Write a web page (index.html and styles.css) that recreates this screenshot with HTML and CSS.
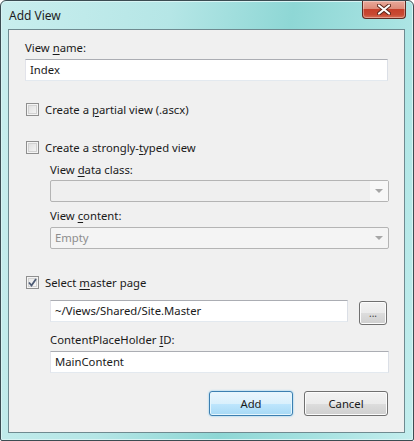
FILE: index.html
```html
<!DOCTYPE html>
<html lang="en">
<head>
    <meta charset="UTF-8">
    <meta name="viewport" content="width=device-width, initial-scale=1.0">
    <title>Add View</title>
    <link rel="stylesheet" href="styles.css">
</head>
<body>
    <div class="window">
        <div class="titlebar">
            <span class="title">Add View</span>
            <div class="close">
                <svg width="14" height="11" viewBox="0 0 14 11">
                    <path d="M2 1.5 L12 9.5 M12 1.5 L2 9.5" stroke="#5a2418" stroke-width="4" stroke-linecap="round"/>
                    <path d="M2 1.5 L12 9.5 M12 1.5 L2 9.5" stroke="#ffffff" stroke-width="2.2" stroke-linecap="round"/>
                </svg>
            </div>
        </div>

        <div class="client">
            <div class="label first">View <u>n</u>ame:</div>
            <div class="textbox">Index</div>

            <label class="check row-partial">
                <span class="box"></span>
                <span>Create a <u>p</u>artial view (.ascx)</span>
            </label>

            <label class="check row-typed">
                <span class="box"></span>
                <span>Create a strongly-<u>t</u>yped view</span>
            </label>

            <div class="group">
                <div class="label gap-small">View <u>d</u>ata class:</div>
                <div class="combo combo-empty">
                    <span class="combo-text"></span>
                    <span class="combo-drop"><span class="arrow"></span></span>
                </div>
                <div class="label gap-mid">View <u>c</u>ontent:</div>
                <div class="combo">
                    <span class="combo-text">Empty</span>
                    <span class="combo-drop"><span class="arrow"></span></span>
                </div>
            </div>

            <label class="check row-master">
                <span class="box checked">
                    <svg width="9" height="9" viewBox="0 0 9 9">
                        <path d="M1 4.5 L3.5 7.5 L8 1" fill="none" stroke="#4d5b75" stroke-width="1.8"/>
                    </svg>
                </span>
                <span>Select <u>m</u>aster page</span>
            </label>

            <div class="group">
                <div class="master-row">
                    <div class="textbox master">~/Views/Shared/Site.Master</div>
                    <button class="btn browse">...</button>
                </div>
                <div class="label gap-holder">ContentPlaceHolder <u>I</u>D:</div>
                <div class="textbox holder">MainContent</div>
            </div>

            <div class="actions">
                <button class="btn default">Add</button>
                <button class="btn">Cancel</button>
            </div>
        </div>
    </div>
</body>
</html>
```

FILE: styles.css
```css
body {
    margin: 0;
    font-family: "Segoe UI", "Noto Sans", sans-serif;
    font-size: 11.3px;
    color: #1a1a1a;
    background: #ffffff;
}
.window {
    width: 414px;
    height: 441px;
    box-sizing: border-box;
    border: 1px solid #3b4c52;
    border-radius: 6px 6px 2px 2px;
    padding: 0 8px 7px 7px;
    display: flex;
    flex-direction: column;
    background: linear-gradient(100deg, #c9eeee 0%, #b5e6e6 35%, #8ed7d5 60%, #a6e2e1 80%, #c4eeee 100%);
    box-shadow: inset 0 0 0 1px #d8f4f4;
}
.titlebar {
    height: 28px;
    display: flex;
    justify-content: space-between;
    align-items: flex-start;
}
.title {
    padding-left: 1px;
    margin-top: 6px;
    font-size: 12px;
    color: #1e1e1e;
}
.close {
    width: 44px;
    height: 18px;
    margin-right: -1px;
    box-sizing: border-box;
    border: 1px solid #5e2b22;
    border-top: none;
    border-radius: 0 0 4px 4px;
    background: linear-gradient(#e9a99a 0%, #dd8c7a 45%, #c6402b 50%, #c84a33 80%, #d86e55 100%);
    box-shadow: inset 0 0 0 1px rgba(255,255,255,0.35);
    display: flex;
    align-items: center;
    justify-content: center;
}
.client {
    flex: 1;
    background: #f0f0f0;
    border: 1px solid #6f8a90;
    padding: 10px 16px 0 16px;
}
.label {
    height: 16px;
    line-height: 16px;
}
.textbox {
    height: 22px;
    box-sizing: border-box;
    border: 1px solid #abadb3;
    border-color: #abadb3 #dbdfe6 #e3e9ef #e2e3ea;
    background: #ffffff;
    padding: 0 4px;
    line-height: 20px;
    margin-top: 3px;
}
.check {
    display: flex;
    align-items: center;
    height: 16px;
    padding-left: 1px;
}
.box {
    width: 13px;
    height: 13px;
    box-sizing: border-box;
    border: 1px solid #8f8f8f;
    background: linear-gradient(135deg, #dcdcdc, #f8f8f8);
    box-shadow: inset 0 0 0 1px #f4f4f4, inset 0 0 0 2px #d2d2d2;
    margin-right: 6px;
    display: flex;
    align-items: center;
    justify-content: center;
}
.box.checked {
    background: linear-gradient(135deg, #e6e6e6, #fafafa);
}
.row-partial {
    margin-top: 20px;
}
.row-typed {
    margin-top: 22px;
}
.row-master {
    margin-top: 25px;
}
.group {
    margin-left: 25px;
    margin-right: -1px;
}
.gap-small {
    margin-top: 7px;
}
.gap-mid {
    margin-top: 6px;
}
.combo {
    height: 22px;
    box-sizing: border-box;
    border: 1px solid #b4b4b4;
    border-radius: 2px;
    background: #f4f4f4;
    display: flex;
    margin-top: 2px;
}
.gap-mid + .combo {
    margin-top: 3px;
}
.combo-empty {
    background: #efefef;
}
.combo-text {
    flex: 1;
    padding-left: 4px;
    line-height: 20px;
    color: #8d8d8d;
}
.combo-drop {
    width: 18px;
    display: flex;
    align-items: center;
    justify-content: center;
}
.combo-empty .combo-drop {
    background: #f7f7f7;
}
.arrow {
    width: 0;
    height: 0;
    border-left: 4px solid transparent;
    border-right: 4px solid transparent;
    border-top: 4px solid #a6a6a6;
}
.master-row {
    display: flex;
    align-items: flex-start;
    margin-top: 10px;
}
.textbox.master {
    width: 298px;
    margin-top: 0;
}
.gap-holder {
    margin-top: 7px;
}
.btn {
    font-family: "Segoe UI", "Noto Sans", sans-serif;
    font-size: 11.3px;
    color: #1a1a1a;
    width: 84px;
    height: 25px;
    padding: 0;
    border: 1px solid #707070;
    border-radius: 3px;
    background: linear-gradient(#f2f2f2 0%, #ebebeb 50%, #dddddd 51%, #cfcfcf 100%);
    box-shadow: inset 0 0 0 1px #fcfcfc;
}
.browse {
    width: 28px;
    height: 24px;
    margin-left: 11px;
    margin-top: 1px;
    font-size: 10px;
    line-height: 18px;
    color: #444;
}
.actions {
    display: flex;
    justify-content: flex-end;
    gap: 11px;
    margin-top: 18px;
}
.btn.default {
    border-color: #3c7fb1;
    background: linear-gradient(#eaf6fd 0%, #d9f0fc 50%, #bee6fd 51%, #a7d9f5 100%);
    box-shadow: inset 0 0 0 1px #e5f6fd, 0 0 2px #6cc1ef;
}
u {
    text-decoration-thickness: 1px;
    text-underline-offset: 2px;
}
```
